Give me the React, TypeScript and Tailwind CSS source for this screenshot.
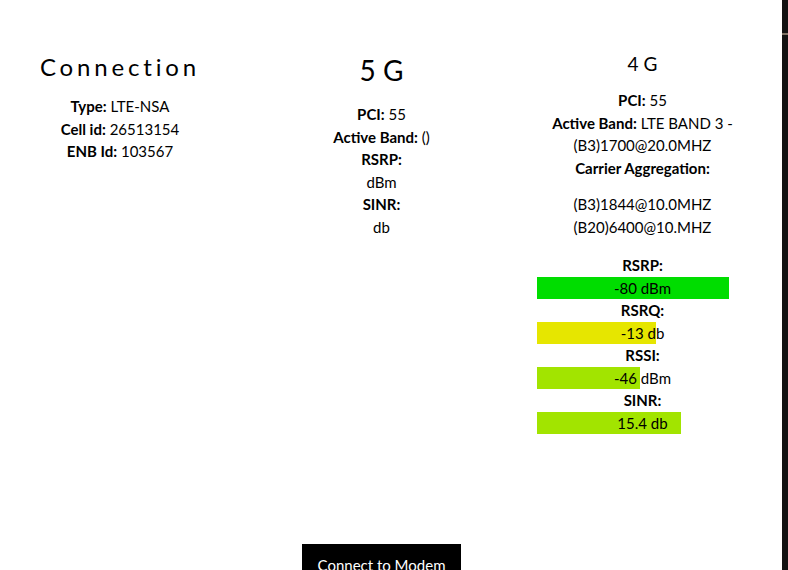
import React from "react";

type Bar = { label: string; value: string; pct: number; color: string };

const bars: Bar[] = [
  { label: "RSRP:", value: "-80 dBm", pct: 90.6, color: "#00dd00" },
  { label: "RSRQ:", value: "-13 db", pct: 56.6, color: "#e6e600" },
  { label: "RSSI:", value: "-46 dBm", pct: 48.6, color: "#a2e400" },
  { label: "SINR:", value: "15.4 db", pct: 68, color: "#a2e400" },
];

function Row({ k, v }: { k: string; v?: string }) {
  return (
    <div>
      <b className="font-bold">{k}</b>
      {v !== undefined ? " " + v : null}
    </div>
  );
}

export default function App() {
  return (
    <div
      className="flex w-[788px] h-[570px] overflow-hidden bg-white text-black"
      style={{ fontFamily: "Lato, 'Open Sans', sans-serif" }}
    >
      <main className="flex-1 flex flex-col text-[15px] leading-[22.5px]">
        <div className="-ml-[11px] grid grid-cols-[262px_261px_261px] items-start">
          {/* Connection */}
          <section className="flex flex-col items-center text-center pt-[52px]">
            <h1 className="text-[24px] leading-[29px] tracking-[0.16em] font-normal mb-[14px]">
              Connection
            </h1>
            <Row k="Type:" v="LTE-NSA" />
            <Row k="Cell id:" v="26513154" />
            <Row k="ENB Id:" v="103567" />
          </section>

          {/* 5G */}
          <section className="flex flex-col items-center text-center pt-[54px]">
            <h2 className="text-[28px] leading-[32px] font-normal mb-[17px]">5 G</h2>
            <Row k="PCI:" v="55" />
            <Row k="Active Band:" v="()" />
            <Row k="RSRP:" />
            <div>dBm</div>
            <Row k="SINR:" />
            <div>db</div>
          </section>

          {/* 4G */}
          <section className="flex flex-col items-center text-center pt-[52px] px-[25px]">
            <h3 className="text-[19px] leading-[23px] font-normal mb-[14px]">4 G</h3>
            <Row k="PCI:" v="55" />
            <div>
              <b className="font-bold">Active Band:</b> LTE BAND 3 -
              <br />
              (B3)1700@20.0MHZ
            </div>
            <Row k="Carrier Aggregation:" />
            <div className="mt-[14px]">
              <div>(B3)1844@10.0MHZ</div>
              <div>(B20)6400@10.MHZ</div>
            </div>
            <div className="mt-[16px] w-[212px] flex flex-col items-center">
              {bars.map((b) => (
                <div key={b.label} className="w-full flex flex-col items-center">
                  <b className="font-bold">{b.label}</b>
                  <div className="relative w-full h-[22.5px]">
                    <div className="h-full" style={{ width: b.pct + "%", backgroundColor: b.color }} />
                    <div className="absolute inset-0 text-center">{b.value}</div>
                  </div>
                </div>
              ))}
            </div>
          </section>

          <div className="col-start-2 flex justify-center mt-[110px]">
            <button className="bg-black text-white px-[16px] py-[10px] text-[15px] leading-[22.5px]">
              Connect to Modem
            </button>
          </div>
        </div>
      </main>
      <aside className="w-[6px] bg-[#121212] flex flex-col">
        <div className="mt-[33px] h-[2px] bg-[#7d7264]" />
      </aside>
    </div>
  );
}
